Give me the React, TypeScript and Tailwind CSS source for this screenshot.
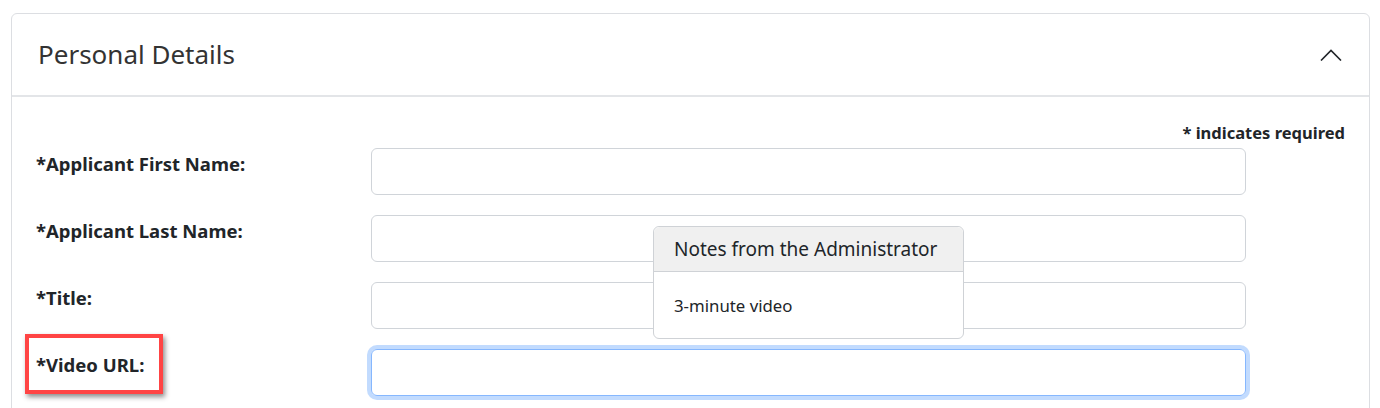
import React from 'react';

const fields = [
  { label: '*Applicant First Name:', focused: false },
  { label: '*Applicant Last Name:', focused: false },
  { label: '*Title:', focused: false },
  { label: '*Video URL:', focused: true },
];

const ChevronUp = () => (
  <svg width="22" height="12" viewBox="0 0 22 12" fill="none" stroke="#212529" strokeWidth="1.6">
    <path d="M1 11.5 L11 1.5 L21 11.5" />
  </svg>
);

export default function App() {
  return (
    <div className="relative h-[408px] overflow-hidden bg-white pl-[11px] pr-[10px] pt-[13px] text-[#212529]" style={{ fontFamily: '"Noto Sans", "Open Sans", sans-serif' }}>
      <div className="rounded-[6px] border border-[#dcdee2]">
        <div className="flex h-[83px] items-center justify-between border-b-2 border-[#e3e5e8] pl-[26px] pr-[27px]">
          <h2 className="text-[26px] font-normal text-[#333]">Personal Details</h2>
          <ChevronUp />
        </div>
        <div className="px-[24px] pt-[24px] pb-10">
          <div className="flex h-[27px] justify-end text-[16.5px] font-bold">* indicates required</div>
          <div className="flex flex-col gap-[20px]">
            {fields.map(f => (
              <div key={f.label} className="flex">
                <label className="w-[335px] shrink-0 pt-[3px] text-[18.5px] font-bold leading-[26px]">{f.label}</label>
                <input
                  type="text"
                  className={
                    f.focused
                      ? 'h-[47px] w-[875px] rounded-[6px] border border-[#86b7fe] shadow-[0_0_0_4px_rgba(13,110,253,0.25)] outline-none'
                      : 'h-[47px] w-[875px] rounded-[6px] border border-[#d0d4d9] outline-none'
                  }
                />
              </div>
            ))}
          </div>
        </div>
      </div>

      <div className="absolute left-[653px] top-[226px] w-[311px] rounded-[6px] border border-[#cfd2d6] bg-white">
        <div className="flex h-[45px] items-center whitespace-nowrap rounded-t-[6px] border-b border-[#cfd2d6] bg-[#f0f0f0] px-[20px] text-[19px]">
          Notes from the Administrator
        </div>
        <div className="px-[20px] pt-[22px] pb-[21px] text-[16.8px] leading-[23px]">3-minute video</div>
      </div>

      <div className="absolute left-[25px] top-[334px] h-[60px] w-[138px] border-[4px] border-[#ff4444] shadow-[2px_3px_5px_rgba(0,0,0,0.45)]" />
    </div>
  );
}
